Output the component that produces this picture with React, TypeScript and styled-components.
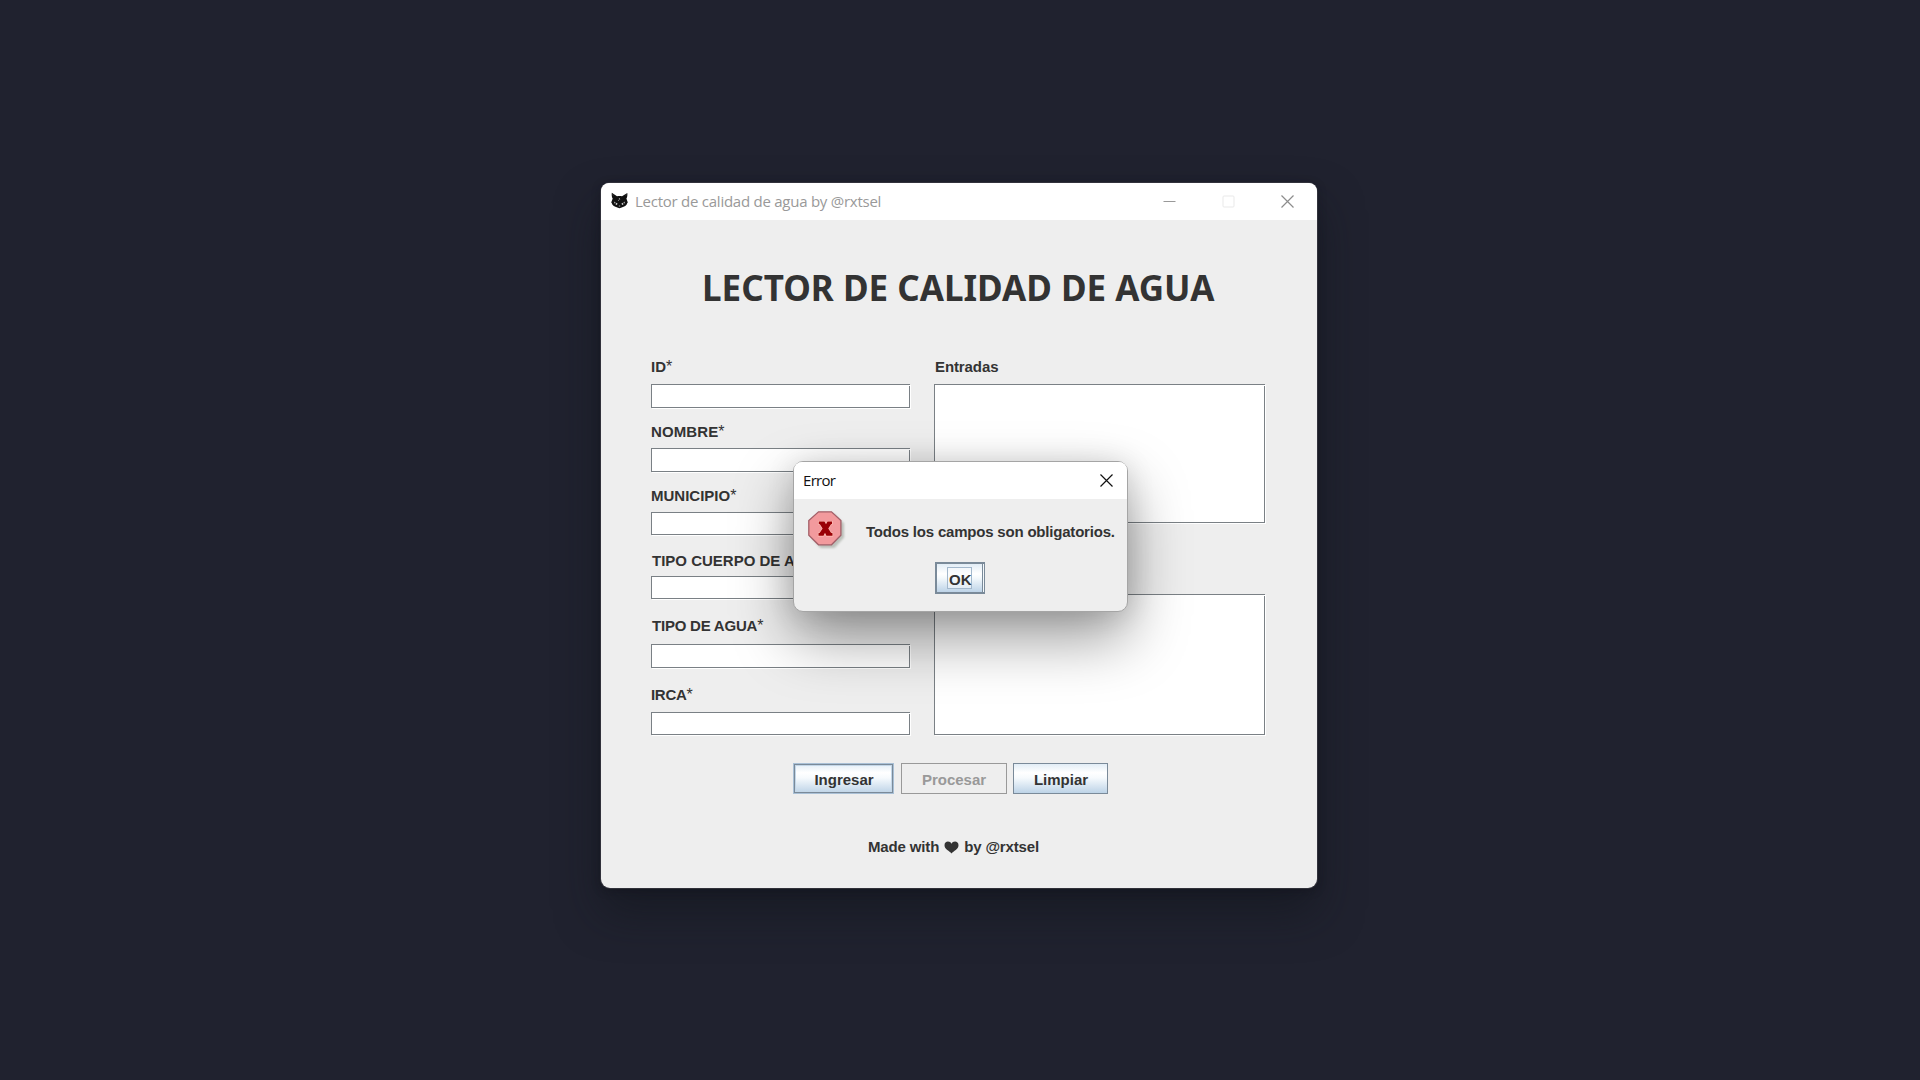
import React from 'react';
import styled, { createGlobalStyle } from 'styled-components';

const GlobalStyle = createGlobalStyle`
  *, *::before, *::after { box-sizing: border-box; }
  html, body { margin: 0; padding: 0; background: #20222f; }
`;

const Desktop = styled.main`
  width: 1920px;
  height: 1080px;
  padding: 183px 0 0 601px;
  background: #20222f;
  overflow: hidden;
  font-family: 'Liberation Sans', Arial, sans-serif;
  font-weight: 700;
  font-size: 15px;
  line-height: 18px;
  color: #333;
`;

const Window = styled.section`
  position: relative;
  width: 716px;
  height: 705px;
  border-radius: 9px;
  background: #eee;
  box-shadow: 0 0 0 1px rgba(60, 60, 68, 0.7), 0 2px 10px rgba(14, 15, 22, 0.4),
    0 24px 44px rgba(16, 20, 26, 0.5);
`;

const TitleBar = styled.header<{ $active?: boolean }>`
  display: flex;
  align-items: center;
  height: 37px;
  padding-left: ${(p) => (p.$active ? 9 : 10)}px;
  padding-right: ${(p) => (p.$active ? 14 : 23)}px;
  border-radius: 8px 8px 0 0;
  background: #fff;
  color: ${(p) => (p.$active ? '#111' : '#999')};
  font-family: 'Open Sans', 'Noto Sans', sans-serif;
  font-weight: 400;
  font-size: 15px;
  line-height: 20px;
`;

const TitleText = styled.span<{ $spacing: number }>`
  flex: 1;
  padding-bottom: 2px;
  white-space: nowrap;
  letter-spacing: ${(p) => p.$spacing}px;
`;

const AppIcon = styled.svg`
  width: 17px;
  height: 17px;
  margin: 0 7px 2px 0;
`;

const Controls = styled.div`
  display: flex;
  gap: 46px;
  margin-bottom: 1px;
  svg { display: block; }
`;

const Heading = styled.h1`
  margin: 0;
  padding: 44px 0 0 101px;
  font-family: 'Noto Sans', 'Open Sans', sans-serif;
  font-size: 35px;
  line-height: 48px;
  font-weight: 700;
  white-space: nowrap;
`;

const Form = styled.div`
  display: flex;
  gap: 24px;
  padding: 46px 0 0 50px;
`;

const Column = styled.div<{ $width: number }>`
  display: flex;
  flex-direction: column;
  width: ${(p) => p.$width}px;
`;

const Label = styled.label<{ $before?: number; $after: number; $indent?: number; $spacing?: number }>`
  height: 18px;
  margin-top: ${(p) => p.$before ?? 0}px;
  margin-bottom: ${(p) => p.$after}px;
  padding-left: ${(p) => p.$indent ?? 0}px;
  letter-spacing: ${(p) => p.$spacing ?? 0}px;
  white-space: nowrap;
`;

const Required = styled.span`
  font-weight: 400;
  font-size: 16px;
`;

const Sunken = styled.div<{ $height: number; $before?: number }>`
  position: relative;
  height: ${(p) => p.$height}px;
  margin-top: ${(p) => p.$before ?? 0}px;
  border: 1px solid #7a8085;
  background: #fff;
  box-shadow: 1px 1px 0 #fff;
  &::after {
    content: '';
    position: absolute;
    top: 0;
    right: -1px;
    width: 1px;
    height: 1px;
    background: #fff;
  }
`;

const Buttons = styled.div`
  display: flex;
  padding: 28px 0 0 192px;
`;

const Button = styled.button<{ $width: number; $left?: number; $kind?: 'focused' | 'disabled' }>`
  width: ${(p) => p.$width}px;
  height: 31px;
  margin: 0 0 0 ${(p) => p.$left ?? 0}px;
  padding: 3px 0 0 ${(p) => (p.$kind === 'disabled' ? 0 : 1)}px;
  border: 1px solid ${(p) => (p.$kind === 'disabled' ? '#999' : p.$kind === 'focused' ? '#a9c0d6' : '#7a8a99')};
  background: ${(p) =>
    p.$kind === 'disabled' ? '#eee' : 'linear-gradient(#e2edf6 0, #fff 30%, #f6fafd 48%, #bdd3e7 100%)'};
  color: ${(p) => (p.$kind === 'disabled' ? '#999' : '#333')};
  font: inherit;
  box-shadow: ${(p) =>
    p.$kind === 'focused' ? 'inset 0 0 0 1px #7a8a99, inset 0 0 0 2px #c4d7e8' : 'none'};
`;

const Footer = styled.footer`
  display: flex;
  align-items: center;
  gap: 5px;
  padding: 44px 0 0 267px;
  letter-spacing: -0.15px;
  white-space: nowrap;
`;

const Dialog = styled.section`
  position: absolute;
  left: 192px;
  top: 278px;
  width: 335px;
  height: 151px;
  border: 1px solid #a5a5a5;
  border-radius: 10px;
  background: #eee;
  box-shadow: 0 2px 28px rgba(0, 0, 0, 0.12), 0 26px 60px rgba(0, 0, 0, 0.4);
`;

const Message = styled.div`
  display: flex;
  padding: 12px 0 0 14px;
`;

const MessageText = styled.p`
  margin: 12px 0 0 18px;
  letter-spacing: -0.2px;
  white-space: nowrap;
`;

const DialogActions = styled.div`
  display: flex;
  padding: 11px 0 0 141px;
`;

const OkButton = styled.button`
  display: flex;
  width: 50px;
  height: 32px;
  padding: 3px 0 0 10px;
  border: 2px solid #7a8a99;
  border-right-width: 1px;
  background: linear-gradient(#e2edf6 0, #fff 35%, #f4f9fc 50%, #bdd3e7 100%);
  box-shadow: inset -1px 0 0 #f4f8fb, inset -2px 0 0 #7a8a99;
  color: #333;
  font: inherit;
`;

const FocusRing = styled.span`
  display: block;
  width: 25px;
  height: 22px;
  padding-top: 3px;
  padding-left: 1px;
  border: 1px solid #a3b8cc;
  background: rgba(247, 249, 252, 0.5);
  text-align: left;
  white-space: nowrap;
`;

function CatIcon() {
  return (
    <AppIcon viewBox="0 0 17 17">
      <path
        d="M.8 .7 6 4.2C7.5 3.8 9.5 3.8 11 4.2L16.3.9C16.6 3 16.3 5.2 15.4 6.6L16.8 10.5C16 11 16 12 15.5 12.7 14 14.8 11.6 15 8.5 16.2 5.4 15 3 14.8 1.5 12.7 1 12 1 11 .2 10.5L1.7 6.6C.8 5.2.5 3 .8.7Z"
        fill="#111"
      />
      <path d="M2.8 9.5 6.7 11.8 5.6 13Q3.5 12.3 2.8 9.5ZM14.2 9.5 10.3 11.8 11.4 13Q13.5 12.3 14.2 9.5Z" fill="#d8d8d8" />
      <path d="M4.4 10.5V12.5M12.6 10.5V12.5" stroke="#111" strokeWidth=".9" />
      <path d="M8.3 6.1 8.7 7.7M7.2 8.1 8 8.8M7.8 14H9.2" stroke="#c9c9c9" strokeWidth=".8" />
      <path d="M1.7 2 2.2 3.8M15.4 2 14.8 3.8" stroke="#555" strokeWidth=".5" />
    </AppIcon>
  );
}

function ErrorIcon() {
  return (
    <svg width="40" height="40" viewBox="0 0 40 40">
      <defs>
        <filter id="soft" x="-20%" y="-20%" width="140%" height="140%">
          <feGaussianBlur stdDeviation="1.2" />
        </filter>
      </defs>
      <path d="M12.5 3H26.5L36 12.5V26.5L26.5 37H12.5L4 27.5V13Z" fill="#aab0a8" opacity=".75" filter="url(#soft)" />
      <path d="M10.5.8H23.5L32.9 9.5V24.2L23.5 33.8H10.5L.8 24.2V9.5Z" fill="#f29a9d" stroke="#a35f68" strokeWidth="1.3" />
      <path
        d="M10.8 10.5H16.5L18 13.2 19.5 10.5H24V13L23 13.3 20.3 17.5 23 21.8 24.5 22.2V24.8H18.4L17 21.8 15.5 24.8H10.5V22.2L11.8 21.8 14.6 17.5 11.9 13.3 10.8 13Z"
        fill="#990005"
        stroke="#ffc4ba"
        strokeWidth="1.2"
        paintOrder="stroke"
      />
    </svg>
  );
}

function CloseIcon({ color }: { color: string }) {
  return (
    <svg width="13" height="13" viewBox="0 0 13 13">
      <path d="M.5 .5 12.5 12.5M12.5 .5 .5 12.5" stroke={color} strokeWidth="1.2" />
    </svg>
  );
}

const fields = [
  { text: 'ID', before: 0, after: 8, height: 24 },
  { text: 'NOMBRE', before: 15, after: 7, height: 24, spacing: 0.1 },
  { text: 'MUNICIPIO', before: 15, after: 7, height: 23 },
  { text: 'TIPO CUERPO DE AGUA', before: 17, after: 6, height: 23, indent: 1 },
  { text: 'TIPO DE AGUA', before: 18, after: 9, height: 24, indent: 1, spacing: -0.22 },
  { text: 'IRCA', before: 18, after: 8, height: 23, spacing: -0.3 },
];

export default function App() {
  return (
    <>
      <GlobalStyle />
      <Desktop>
        <Window>
          <TitleBar>
            <CatIcon />
            <TitleText $spacing={-0.25}>Lector de calidad de agua by @rxtsel</TitleText>
            <Controls>
              <svg width="13" height="13" viewBox="0 0 13 13">
                <path d="M.5 6.5H12.5" stroke="#999" />
              </svg>
              <svg width="13" height="13" viewBox="0 0 13 13">
                <rect x="1" y="1" width="11" height="11" rx="1" fill="none" stroke="#e9e9e9" />
              </svg>
              <CloseIcon color="#8c8c8c" />
            </Controls>
          </TitleBar>
          <Heading>LECTOR DE CALIDAD DE AGUA</Heading>
          <Form>
            <Column $width={259}>
              {fields.map((f) => (
                <React.Fragment key={f.text}>
                  <Label $before={f.before} $after={f.after} $indent={f.indent} $spacing={f.spacing}>
                    {f.text}
                    <Required>*</Required>
                  </Label>
                  <Sunken $height={f.height} />
                </React.Fragment>
              ))}
            </Column>
            <Column $width={331}>
              <Label $after={8} $indent={1} $spacing={-0.1}>Entradas</Label>
              <Sunken $height={139} />
              <Sunken $height={141} $before={71} />
            </Column>
          </Form>
          <Buttons>
            <Button $width={101} $kind="focused">Ingresar</Button>
            <Button $width={106} $left={7} $kind="disabled">Procesar</Button>
            <Button $width={95} $left={6}>Limpiar</Button>
          </Buttons>
          <Footer>
            <span>Made with</span>
            <svg width="15" height="13" viewBox="0 0 15 13">
              <path d="M7.5 12.5C5.5 9.8.5 8.3.5 4.2.5 1.7 2.1.5 4 .5 5.6.5 6.8 1.4 7.5 2.8 8.2 1.4 9.4.5 11 .5 12.9.5 14.5 1.7 14.5 4.2 14.5 8.3 9.5 9.8 7.5 12.5Z" fill="#333" />
            </svg>
            <span>by @rxtsel</span>
          </Footer>
          <Dialog role="dialog">
            <TitleBar $active>
              <TitleText $spacing={-0.7}>Error</TitleText>
              <CloseIcon color="#111" />
            </TitleBar>
            <Message>
              <ErrorIcon />
              <MessageText>Todos los campos son obligatorios.</MessageText>
            </Message>
            <DialogActions>
              <OkButton>
                <FocusRing>OK</FocusRing>
              </OkButton>
            </DialogActions>
          </Dialog>
        </Window>
      </Desktop>
    </>
  );
}
